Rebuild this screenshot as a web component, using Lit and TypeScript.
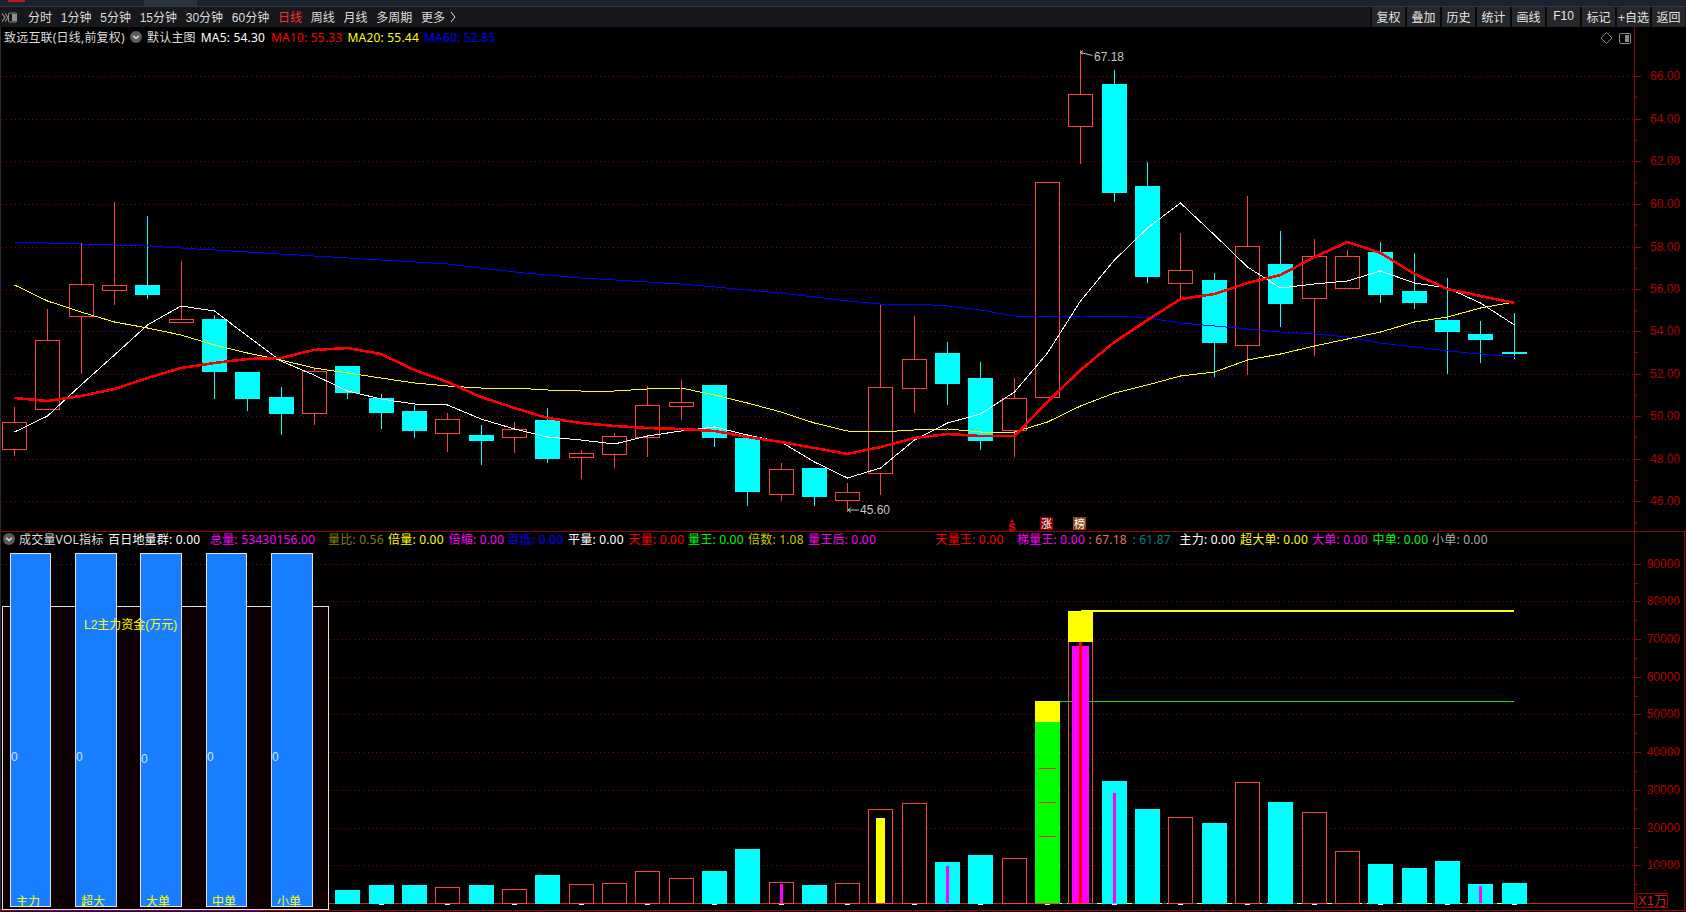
import { LitElement, html, css, svg } from "lit";
import { customElement } from "lit/decorators.js";

type Candle = [number, number, number, number, number, 0 | 1];
// x, wick top, wick bottom, body top, body bottom, rising?
const CANDLES: Candle[] = [
  [14.5, 407, 456, 422, 449, 1], [47.5, 309, 410, 340, 409, 1], [81, 243, 374, 284, 316, 1],
  [114.5, 202, 305, 285, 290, 1], [147.5, 216, 299, 285, 295, 0], [181, 261, 320, 319, 322, 1],
  [214.5, 315, 399, 319, 372, 0], [247.5, 372, 411, 372, 399, 0], [281, 387, 435, 397, 414, 0],
  [314, 368, 425, 371, 413, 1], [347.5, 366, 399, 366, 393, 0], [381, 394, 429, 398, 413, 0],
  [414.5, 405, 438, 411, 431, 0], [447.5, 413, 452, 419, 433, 1], [481, 425, 465, 435, 441, 0],
  [514.5, 422, 453, 429, 437, 1], [547.5, 408, 463, 420, 459, 0], [581, 450, 479, 453, 457, 1],
  [614.5, 433, 468, 436, 454, 1], [647.5, 386, 457, 405, 437, 1], [681, 380, 420, 402, 406, 1],
  [714.5, 385, 447, 385, 438, 0], [747.5, 438, 506, 438, 492, 0], [781, 463, 501, 469, 494, 1],
  [814.5, 468, 506, 468, 497, 0], [847.5, 483, 512, 492, 500, 1], [880.5, 304, 495, 387, 473, 1],
  [914.5, 316, 413, 359, 388, 1], [947.5, 342, 405, 353, 384, 0], [980.5, 362, 450, 378, 441, 0],
  [1014.5, 378, 457, 398, 430, 1], [1047.5, 182, 397, 182, 397, 1], [1080.5, 50, 164, 94, 126, 1],
  [1114.5, 70, 202, 84, 193, 0], [1147.5, 162, 283, 186, 277, 0], [1180.5, 233, 299, 270, 283, 1],
  [1214.5, 273, 377, 280, 343, 0], [1247.5, 196, 375, 246, 345, 1], [1280.5, 231, 327, 264, 304, 0],
  [1314.5, 239, 356, 256, 298, 1], [1347.5, 250, 288, 256, 288, 1], [1380.5, 242, 303, 252, 295, 0],
  [1414.5, 253, 309, 291, 303, 0], [1447.5, 278, 374, 320, 332, 0], [1480.5, 321, 363, 334, 340, 0],
  [1514.5, 313, 359, 352, 354, 0],
];
const xs = CANDLES.map((c) => c[0]);
const ptsOf = (ys: number[]) => ys.map((y, i) => `${xs[i]},${y}`).join(" ");

const MA5 = [432, 416, 385, 355, 325, 306, 311, 336, 361, 375, 391, 399, 404, 405, 419, 429, 437, 440, 444, 436, 431, 427, 435, 442, 462, 478, 468, 440, 423, 414, 392, 353, 301, 260, 228, 203, 235, 267, 288, 284, 281, 271, 283, 288, 303, 325];
const MA10 = [398, 401, 396, 389, 378, 368, 363, 359, 358, 350, 348, 354, 370, 382, 397, 408, 418, 423, 426, 428, 429, 431, 437, 442, 448, 454, 447, 438, 434, 436, 436, 402, 370, 342, 320, 299, 294, 283, 275, 257, 242, 253, 274, 289, 296, 303];
const MA20 = [285, 301, 312, 322, 328, 335, 345, 353, 360, 368, 373, 378, 383, 386, 388, 388, 390, 391, 391, 389, 388, 395, 403, 412, 423, 431, 432, 430, 429, 432, 432, 422, 406, 393, 385, 376, 372, 360, 354, 346, 339, 332, 322, 317, 308, 302];
const MA60 = [242, 243, 244, 245, 246, 248, 250, 252, 254, 256, 258, 260, 262, 264, 268, 272, 275, 278, 280, 282, 284, 287, 290, 293, 297, 301, 304, 304, 306, 310, 316, 317, 316, 316, 318, 323, 326, 329, 332, 334, 337, 343, 347, 351, 354, 357];

// Volume column tops for candles 11..46 (the earlier ones sit behind the left panel).
const VOL_TOPS = [890, 885, 885, 887, 885, 889, 875, 884, 883, 871, 878, 871, 849, 882, 885, 883, 809, 803, 862, 855, 858, 701, 611, 781, 809, 817, 823, 782, 802, 812, 851, 864, 868, 861, 884, 883];
const VOL_FIRST = 10;

const PRICE_TICKS = [["66.00", 76], ["64.00", 119], ["62.00", 161], ["60.00", 204], ["58.00", 247], ["56.00", 289], ["54.00", 331], ["52.00", 374], ["50.00", 416], ["48.00", 459], ["46.00", 501]] as const;
const VOL_TICKS = [["90000", 564], ["80000", 601], ["70000", 639], ["60000", 677], ["50000", 714], ["40000", 752], ["30000", 790], ["20000", 828], ["10000", 865]] as const;

const BARS = [
  { x: 10, w: 41, label: "主力", lx: 28, zx: 11, zy: 757 },
  { x: 75, w: 42, label: "超大", lx: 93, zx: 76, zy: 757 },
  { x: 140, w: 42, label: "大单", lx: 158, zx: 141, zy: 759 },
  { x: 206, w: 41, label: "中单", lx: 224, zx: 207, zy: 757 },
  { x: 271, w: 42, label: "小单", lx: 289, zx: 272, zy: 757 },
];

const PERIODS = ["分时", "1分钟", "5分钟", "15分钟", "30分钟", "60分钟", "日线", "周线", "月线", "多周期", "更多"];
const BUTTONS = ["复权", "叠加", "历史", "统计", "画线", "F10", "标记", "+自选", "返回"];

// Legend entries carry the column they start at; each one is as wide as the distance to the next.
const MA_LEGEND = [
  { t: "默认主图", c: "#ddd", x: 147 },
  { t: "MA5: 54.30", c: "#fff", x: 200.7 },
  { t: "MA10: 55.33", c: "#f00", x: 271 },
  { t: "MA20: 55.44", c: "#ff0", x: 347.5 },
  { t: "MA60: 52.85", c: "#00f", x: 424 },
];
const VOL_LEGEND = [
  { t: "百日地量群: 0.00", c: "#fff", x: 108 },
  { t: "总量: 53430156.00", c: "#f0f", x: 210 },
  { t: "量比: 0.56", c: "#808000", x: 328 },
  { t: "倍量: 0.00", c: "#ff0", x: 388 },
  { t: "倍缩: 0.00", c: "#f0f", x: 448.5 },
  { t: "百低: 0.00", c: "#00f", x: 507.5 },
  { t: "平量: 0.00", c: "#fff", x: 568 },
  { t: "天量: 0.00", c: "#f00", x: 628.5 },
  { t: "量王: 0.00", c: "#0f0", x: 688 },
  { t: "倍数: 1.08", c: "#c8c800", x: 748 },
  { t: "量王后: 0.00", c: "#f0f", x: 808 },
  { t: "天量王: 0.00", c: "#f00", x: 935.5 },
  { t: "梯量王: 0.00", c: "#f0f", x: 1017 },
  { t: ": 67.18", c: "#e07070", x: 1088.5 },
  { t: ": 61.87", c: "#008080", x: 1132.5 },
  { t: "主力: 0.00", c: "#fff", x: 1179.5 },
  { t: "超大单: 0.00", c: "#ff0", x: 1240 },
  { t: "大单: 0.00", c: "#f0f", x: 1312 },
  { t: "中单: 0.00", c: "#0f0", x: 1372.5 },
  { t: "小单: 0.00", c: "#aaa", x: 1432 },
];
const withWidths = (items: { t: string; c: string; x: number }[]) =>
  items.map((m, i) => ({ ...m, w: i + 1 < items.length ? items[i + 1].x - m.x : 80 }));

const RED = "#ff4040";
const AXIS = "#990000";

@customElement("app-root")
export class AppRoot extends LitElement {
  static styles = css`
    :host {
      display: block;
      width: 100%;
      height: 912px;
      overflow: hidden;
      background: #000;
      color: #ddd;
      font: 12px "Liberation Sans", "Noto Sans CJK SC", sans-serif;
    }
    .strip {
      display: flex;
      height: 6px;
      background: #1b2230;
      border-bottom: 1px solid #33373d;
    }
    .tab { width: 17px; height: 2px; margin-left: 8px; background: #c8161d; }
    .seg { width: 53px; margin-left: 119px; background: #2a3340; }
    .toolbar {
      display: flex;
      align-items: center;
      height: 20px;
      background: #17181b;
    }
    .tool-icon { width: 16px; height: 11px; margin: 0 11px 0 1px; flex: none; }
    .periods { display: flex; gap: 8.75px; padding-bottom: 2px; }
    .periods .on { color: #ff3030; }
    .chev { margin-left: 5px; width: 6px; height: 12px; flex: none; }
    .buttons {
      display: grid;
      grid-auto-flow: column;
      grid-auto-columns: 35px;
      margin: 0 1px 0 auto;
      height: 100%;
    }
    .buttons span {
      display: flex;
      align-items: center;
      justify-content: center;
      white-space: nowrap;
      background: #25272a;
      border-left: 2px solid #08090a;
      color: #e4e4e4;
      padding-bottom: 2px;
      box-sizing: border-box;
    }
    .main { position: relative; height: 504px; }
    .vol { position: relative; height: 381px; }
    .canvas { position: absolute; inset: 0; width: 100%; height: 100%; display: block; }
    .legend {
      position: relative;
      z-index: 1;
      display: flex;
      align-items: center;
      white-space: nowrap;
      font-family: "Noto Sans", "Noto Sans CJK SC", sans-serif;
      letter-spacing: 0.2px;
    }
    .legend span { flex: none; }
    .main .legend { height: 20px; }
    .vol .legend { height: 16px; }
    .name { width: 130px; padding-left: 4px; box-sizing: border-box; }
    .vname { width: 89px; }
    .dot { width: 12px; height: 12px; flex: none; margin-right: 5px; }
    .vol .dot { margin: 0 4px 0 3px; }
    .ax { font: 12px "Liberation Sans", sans-serif; fill: #b30000; text-anchor: end; dominant-baseline: central; }
    .note { font: 12px "Liberation Sans", sans-serif; fill: #c4c4c4; dominant-baseline: central; }
    .cap { font: 12px "Liberation Sans", "Noto Sans CJK SC", sans-serif; fill: #ff0; dominant-baseline: central; }
    .zero { font: 12px "Liberation Sans", sans-serif; fill: #cfe6ff; dominant-baseline: central; }
    .sig { font: 11px "Liberation Sans", "Noto Sans CJK SC", sans-serif; fill: #fff; text-anchor: middle; dominant-baseline: central; }
    .sig-s { font: bold 11px "Liberation Sans", sans-serif; fill: #f00; text-anchor: middle; dominant-baseline: central; }
    .x1 { font: 13px "Liberation Sans", "Noto Sans CJK SC", sans-serif; fill: #c81e1e; dominant-baseline: central; }
  `;

  private gridLine(y: number, x1: number) {
    return svg`<line x1=${x1} x2="1634" y1=${y + 0.5} y2=${y + 0.5} stroke="#8f0000" stroke-width="1" stroke-dasharray="1 3.3"></line>`;
  }

  private axisTicks(ticks: readonly (readonly [string, number])[], step: number) {
    return ticks.map(([t, y]) => svg`
      ${this.gridLine(y, 2)}
      <line x1="1635" x2="1641" y1=${y + 0.5} y2=${y + 0.5} stroke=${AXIS}></line>
      <line x1="1635" x2="1638" y1=${y + step / 2 + 0.5} y2=${y + step / 2 + 0.5} stroke=${AXIS}></line>
      <text class="ax" x="1680" y=${y - 0.5}>${t}</text>
    `);
  }

  private renderCandle([x, wt, wb, bt, bb, up]: Candle) {
    const color = up ? RED : "#00ffff";
    return svg`
      <line x1=${x} x2=${x} y1=${wt} y2=${wb} stroke=${color} stroke-width="1"></line>
      ${up
        ? svg`<rect x=${x - 12} y=${bt} width="24" height=${bb - bt} fill="#000" stroke=${RED} stroke-width="1"></rect>`
        : svg`<rect x=${x - 12.5} y=${bt} width="25" height=${bb - bt} fill="#00ffff"></rect>`}
    `;
  }

  private renderMainChart() {
    return svg`<svg class="canvas" viewBox="0 27 1686 504" shape-rendering="crispEdges">
      <line x1="0.5" x2="0.5" y1="27" y2="531" stroke="#2c2c2c"></line>
      ${this.axisTicks(PRICE_TICKS, 42.5)}
      <line x1="1634.5" x2="1634.5" y1="27" y2="531" stroke=${AXIS} stroke-width="1.5"></line>
      ${CANDLES.map((c) => this.renderCandle(c))}
      <polyline points=${ptsOf(MA60)} fill="none" stroke="#0000ff" stroke-width="1"></polyline>
      <polyline points=${ptsOf(MA20)} fill="none" stroke="#ffff00" stroke-width="1"></polyline>
      <polyline points=${ptsOf(MA5)} fill="none" stroke="#ffffff" stroke-width="1"></polyline>
      <polyline points=${ptsOf(MA10)} fill="none" stroke="#ff0000" stroke-width="2.6"></polyline>

      <g shape-rendering="auto">
        <path d="M1083 50.5 L1080.5 52.5 L1083 54.5 M1080.5 52.5 L1092.5 55.5" fill="none" stroke="#c4c4c4" stroke-width="1"></path>
        <text class="note" x="1094" y="56.5">67.18</text>
        <path d="M851 507.5 L848 510 L851 512.5 M848 510 L859 510" fill="none" stroke="#c4c4c4" stroke-width="1"></path>
        <text class="note" x="860" y="510">45.60</text>
        <path d="M1606.5 32.5 L1612 38 L1606.5 43.5 L1601 38 Z" fill="none" stroke="#8a8a8a" stroke-width="1"></path>
        <rect x="1619.5" y="33.5" width="11" height="10" rx="1.5" fill="none" stroke="#8a8a8a" stroke-width="1"></rect>
        <rect x="1625" y="35" width="4" height="7" fill="#8a8a8a"></rect>
        <path d="M1012 519 L1014 522 L1010 522 Z" fill="#f00"></path>
        <text class="sig-s" x="1012" y="526.5">S</text>
      </g>
      <rect x="1040" y="517" width="13" height="13" fill="#8b0000"></rect>
      <text class="sig" x="1046.5" y="523.5" shape-rendering="auto">涨</text>
      <rect x="1073" y="517" width="13" height="13" fill="#8b4513"></rect>
      <text class="sig" x="1079.5" y="523.5" shape-rendering="auto">榜</text>
    </svg>`;
  }

  private renderVolColumn(top: number, i: number) {
    const c = CANDLES[i + VOL_FIRST];
    const x = c[0];
    const base = 903;
    if (c[5]) {
      const hollow = i + VOL_FIRST === 32;
      return svg`<rect x=${x - 12} y=${top} width="24" height=${base - top} fill=${hollow ? "none" : "#000"} stroke=${RED} stroke-width="1"></rect>`;
    }
    return svg`<rect x=${x - 12.5} y=${top} width="25" height=${base + 1 - top} fill="#00ffff"></rect>`;
  }

  private renderLeftPanel() {
    return svg`
      <rect x="2.5" y="606.5" width="326" height="302.5" fill="#0e0000" stroke="#e2e2e2" stroke-width="1"></rect>
      ${BARS.map((b) => svg`
        <rect x=${b.x + 0.5} y="553.5" width=${b.w - 1} height="353" fill="#187eff" stroke="#e2e2e2" stroke-width="1"></rect>
      `)}
      <g shape-rendering="auto">
        <text class="cap" x="84" y="625">L2主力资金(万元)</text>
        ${BARS.map((b) => svg`
          <text class="zero" x=${b.zx} y=${b.zy}>0</text>
          <text class="cap" x=${b.lx} y="902" text-anchor="middle">${b.label}</text>
        `)}
      </g>
    `;
  }

  private renderVolChart() {
    const ticks = CANDLES.map((c, i) => (i % 2 === 1 && i >= VOL_FIRST ? c[0] : 0)).filter(Boolean);
    return svg`<svg class="canvas" viewBox="0 531 1686 381" shape-rendering="crispEdges">
      <line x1="0.5" x2="0.5" y1="531" y2="912" stroke="#2c2c2c"></line>
      ${this.axisTicks(VOL_TICKS, 37.6)}
      <line x1="0" x2="1686" y1="531.5" y2="531.5" stroke=${AXIS} stroke-width="1.5"></line>
      <line x1="1634.5" x2="1634.5" y1="531" y2="911" stroke=${AXIS} stroke-width="1.5"></line>
      <line x1="1684.5" x2="1684.5" y1="531" y2="911" stroke=${AXIS} stroke-width="1"></line>
      <line x1="329" x2="1634" y1="903.5" y2="903.5" stroke="#cc2222"></line>
      <line x1="0" x2="1686" y1="910.5" y2="910.5" stroke=${AXIS}></line>
      <line x1="0" x2="330" y1="909.5" y2="909.5" stroke="#cc2222"></line>
      <line x1="10" x2="260" y1="911.5" y2="911.5" stroke="#00108a"></line>
      <line x1="1047" x2="1514" y1="903.5" y2="903.5" stroke="#107a80"></line>
      <line x1="1047" x2="1514" y1="903.5" y2="903.5" stroke="#ffff33" stroke-dasharray="5 5"></line>
      <line x1="1060" x2="1514" y1="701.5" y2="701.5" stroke="#00e600"></line>

      ${VOL_TOPS.map((t, i) => this.renderVolColumn(t, i))}
      ${ticks.map((x) => svg`<rect x=${x - 2.5} y="904" width="5" height="1" fill="#fff"></rect>`)}

      <rect x="876" y="818" width="9" height="85" fill="#ffff00"></rect>
      <rect x="946" y="866" width="3" height="37" fill="#ff00ff"></rect>
      <rect x="780" y="884" width="3" height="19" fill="#ff00ff"></rect>

      <rect x="1035" y="722" width="25" height="181" fill="#00ff00"></rect>
      <rect x="1035" y="701" width="25" height="21" fill="#ffff00"></rect>
      ${[768, 802, 836].map((y) => svg`<rect x="1039" y=${y} width="17" height="1" fill="#ff2020"></rect>`)}

      <rect x="1072" y="646" width="17" height="257" fill="#ff00ff"></rect>
      <rect x="1079" y="642" width="3" height="261" fill="#ff0000"></rect>
      <rect x="1068" y="611" width="25" height="31" fill="#ffff00"></rect>
      <rect x="1081" y="610" width="433" height="2" fill="#ffff00"></rect>

      <rect x="1113" y="793" width="3" height="110" fill="#ff00ff"></rect>
      <rect x="1479" y="886" width="3" height="17" fill="#ff00ff"></rect>

      <rect x="1636" y="893.5" width="31" height="14" fill="none" stroke=${AXIS}></rect>
      <text class="x1" x="1638" y="900.5" shape-rendering="auto">X1万</text>

      ${this.renderLeftPanel()}
    </svg>`;
  }

  private chevDot() {
    return html`<svg class="dot" viewBox="0 0 12 12">
      <circle cx="6" cy="6" r="6" fill="#5a5a5a"></circle>
      <path d="M3.2 4.8 L6 7.6 L8.8 4.8" fill="none" stroke="#dcdcdc" stroke-width="1.4"></path>
    </svg>`;
  }

  render() {
    return html`
      <div class="strip"><span class="tab"></span><span class="seg"></span></div>
      <div class="toolbar">
        <svg class="tool-icon" viewBox="0 0 16 11">
          <path d="M1 1.5 L4 5.5 L1 9.5 M4 1.5 L7 5.5 L4 9.5" fill="none" stroke="#8c8c8c" stroke-width="1.2"></path>
          <rect x="7.5" y="1" width="8" height="9" rx="1" fill="none" stroke="#8c8c8c"></rect>
          <rect x="11" y="2" width="4" height="7" fill="#8c8c8c"></rect>
        </svg>
        <div class="periods">
          ${PERIODS.map((p) => html`<span class=${p === "日线" ? "on" : ""}>${p}</span>`)}
        </div>
        <svg class="chev" viewBox="0 0 6 12">
          <path d="M1 1 L5 6 L1 11" fill="none" stroke="#ddd" stroke-width="1"></path>
        </svg>
        <div class="buttons">${BUTTONS.map((b) => html`<span>${b}</span>`)}</div>
      </div>
      <section class="main">
        ${this.renderMainChart()}
        <div class="legend">
          <span class="name">致远互联(日线,前复权)</span>
          ${this.chevDot()}
          ${withWidths(MA_LEGEND).map((m) => html`<span style="color:${m.c};width:${m.w}px">${m.t}</span>`)}
        </div>
      </section>
      <section class="vol">
        ${this.renderVolChart()}
        <div class="legend">
          ${this.chevDot()}
          <span class="vname">成交量VOL指标</span>
          ${withWidths(VOL_LEGEND).map((m) => html`<span style="color:${m.c};width:${m.w}px">${m.t}</span>`)}
        </div>
      </section>
    `;
  }
}
